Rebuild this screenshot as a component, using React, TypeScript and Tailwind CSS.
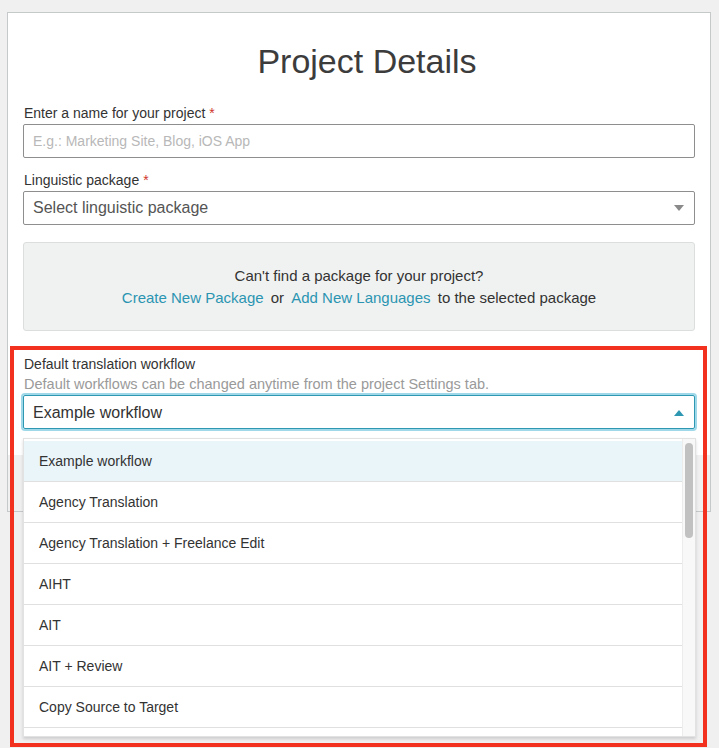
import React from 'react';

const workflows = [
  'Example workflow',
  'Agency Translation',
  'Agency Translation + Freelance Edit',
  'AIHT',
  'AIT',
  'AIT + Review',
  'Copy Source to Target',
];

const Caret = ({ up = false, color }: { up?: boolean; color: string }) => (
  <svg width="10" height="6" viewBox="0 0 10 6" className="block">
    {up ? <path d="M0 6 L5 0 L10 6 Z" fill={color} /> : <path d="M0 0 L10 0 L5 6 Z" fill={color} />}
  </svg>
);

const Required = () => <span className="ml-1 text-[#d0342c]">*</span>;

export default function App() {
  return (
    <div
      className="min-h-[748px] bg-[#f0f0f0] pl-[7px] pt-[12px] text-[#333]"
      style={{ fontFamily: '"Liberation Sans", Arial, sans-serif' }}
    >
      <div className="relative w-[704px] border border-[#c6c9c9] bg-white">
        <div className="px-[15px]">
          <h1 className="pl-[16px] pt-[28px] text-center text-[34px] leading-[40px] text-[#3c3c3c]">Project Details</h1>

          <label className="mt-[22px] block pl-[1px] text-[14px] leading-[20px]">
            Enter a name for your project
            <Required />
          </label>
          <div className="mt-[1px] flex h-[34px] items-center rounded-[2px] border border-[#8e8e8e] px-[9px] text-[14px] text-[#b8b8b8]">
            E.g.: Marketing Site, Blog, iOS App
          </div>

          <label className="mt-[12px] block pl-[1px] text-[14px] leading-[20px]">
            Linguistic package
            <Required />
          </label>
          <div className="mt-[1px] flex h-[34px] items-center justify-between rounded-[2px] border border-[#8e8e8e] pl-[9px] pr-[10px] text-[16px] text-[#555]">
            <span>Select linguistic package</span>
            <Caret color="#8a8a8a" />
          </div>

          <div className="mt-[17px] flex h-[89px] flex-col items-center justify-center rounded-[3px] border border-[#dcdede] bg-[#f0f2f2] text-[15px] leading-[22px]">
            <p>Can't find a package for your project?</p>
            <p>
              <span className="mr-[3px] text-[#2b95b1]">Create New Package</span> or{' '}
              <span className="mx-[3px] text-[#2b95b1]">Add New Languages</span> to the selected package
            </p>
          </div>

          <label className="mt-[23px] block pl-[1px] text-[14px] leading-[20px]">Default translation workflow</label>
          <p className="pl-[1px] text-[14.5px] leading-[20px] text-[#9a9a9a]">
            Default workflows can be changed anytime from the project Settings tab.
          </p>
          <div className="mt-[1px] flex h-[34px] items-center justify-between rounded-[2px] border border-[#2e97b2] pl-[9px] pr-[10px] pt-[2px] text-[16px] text-[#333] shadow-[0_0_0_2px_#9fd8e8]">
            <span>Example workflow</span>
            <Caret up color="#2e97b2" />
          </div>
        </div>

        <div className="mt-[26px] flex h-[56px] items-center justify-end bg-[#f0f0f0] pr-[15px]">
          <button className="h-[34px] w-[90px] rounded-[2px] bg-[#9fd3e2] text-[14px] text-white">Continue</button>
        </div>

        {/* open dropdown menu */}
        <div className="absolute left-[15px] top-[425px] h-[299px] w-[673px] overflow-hidden border border-[#e2e2e2] bg-white shadow-[0_2px_3px_rgba(0,0,0,0.15)]">
          <ul className="pr-[13px] pt-[2px]">
            {workflows.map((w, i) => (
              <li
                key={w}
                className={`flex h-[41px] items-center border-b border-[#e0e0e0] pl-[15px] text-[14px] text-[#333] ${
                  i === 0 ? 'bg-[#eaf5fa]' : 'bg-white'
                }`}
              >
                {w}
              </li>
            ))}
            <li className="h-[41px] border-b border-[#e0e0e0]" />
          </ul>
          <div className="absolute right-0 top-0 h-full w-[13px] border-l border-[#ececec] bg-[#f8f8f8]">
            <div className="mx-auto mt-[4px] h-[95px] w-[8px] rounded-full bg-[#c1c1c1]" />
          </div>
        </div>
      </div>

      {/* annotation outline */}
      <div className="pointer-events-none absolute left-[10px] top-[346px] h-[401px] w-[697px] border-[4px] border-[#f2321f]" />
    </div>
  );
}
